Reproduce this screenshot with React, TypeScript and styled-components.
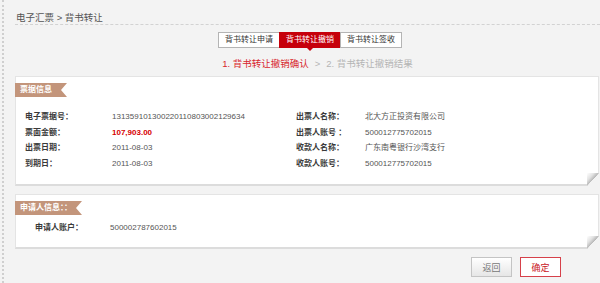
import { Fragment } from "react";
import styled, { createGlobalStyle } from "styled-components";

const FONT = `"Liberation Sans", "Noto Sans CJK SC", sans-serif`;

const GlobalStyle = createGlobalStyle`
  html, body {
    margin: 0;
    padding: 0;
    background-color: #f3f3f3;
    font-family: ${FONT};
  }
`;

const Page = styled.div`
  height: 283px;
  margin-left: 2px;
  border-left: 2px dotted #cfcfcf;
  padding-left: 11px;
  box-sizing: border-box;
  overflow: hidden;
`;

const Breadcrumb = styled.div`
  padding-top: 11px;
  padding-left: 1px;
  line-height: 13px;
  font-size: 9.5px;
  color: #555;
  border-bottom: 1px dashed #d2d2d2;
`;

const TabBar = styled.div`
  display: flex;
  justify-content: center;
  padding-left: 6px;
  margin-top: 7px;
`;

const Tab = styled.div<{ $active?: boolean }>`
  position: relative;
  height: 16px;
  line-height: 14px;
  box-sizing: border-box;
  padding: 0 6px;
  font-size: 8px;
  border: 1px solid ${(p) => (p.$active ? "#c6000b" : "#b4b4b4")};
  background-color: ${(p) => (p.$active ? "#c6000b" : "#fff")};
  color: ${(p) => (p.$active ? "#fff" : "#333")};
  margin-left: -1px;

  ${(p) =>
    p.$active &&
    `
    &::after {
      content: "";
      position: absolute;
      left: 50%;
      bottom: -4px;
      margin-left: -3px;
      border-left: 3px solid transparent;
      border-right: 3px solid transparent;
      border-top: 3px solid #c6000b;
    }
  `}
`;

const Steps = styled.div`
  display: flex;
  justify-content: center;
  padding-left: 20px;
  margin-top: 9px;
  line-height: 14px;
  font-size: 9.5px;
  gap: 6px;
`;

const Step = styled.span<{ $current?: boolean }>`
  color: ${(p) => (p.$current ? "#d8262c" : "#b5b5b5")};
`;

const Card = styled.div`
  position: relative;
  margin-right: 1px;
  background-color: #fff;
  border: 1px solid #e4e4e4;
  border-bottom: 2px solid #dcdcdc;
  padding-top: 6px;

  &::after {
    content: "";
    position: absolute;
    right: -1px;
    bottom: -2px;
    width: 12px;
    height: 13px;
    background: linear-gradient(
      to bottom right,
      #ffffff 0%,
      #e2e2e2 30%,
      #b9b9b9 49%,
      #f3f3f3 51%
    );
  }
`;

const InfoCard = styled(Card)`
  margin-top: 5px;
  height: 110px;
  box-sizing: border-box;
`;

const ApplicantCard = styled(Card)`
  margin-top: 8px;
  height: 55px;
  box-sizing: border-box;
`;

const Ribbon = styled.div<{ $width: number }>`
  width: ${(p) => p.$width}px;
  height: 14px;
  margin-left: -1px;
  box-sizing: border-box;
  padding-left: 5px;
  line-height: 14px;
  font-size: 8px;
  font-weight: bold;
  color: #fff;
  background-color: #c3957b;
  clip-path: polygon(0 0, 100% 0, calc(100% - 6px) 50%, 100% 100%, 0 100%);
`;

const InfoGrid = styled.div`
  display: grid;
  grid-template-columns: 87px 184px 69px 1fr;
  padding: 12px 0 0 9px;
`;

const Label = styled.span`
  line-height: 15.6px;
  font-size: 8px;
  font-weight: bold;
  color: #3a3a3a;
  white-space: nowrap;
`;

const Value = styled.span<{ $money?: boolean }>`
  line-height: 15.6px;
  font-size: 8px;
  color: ${(p) => (p.$money ? "#d60000" : "#555")};
  font-weight: ${(p) => (p.$money ? "bold" : "normal")};
  white-space: nowrap;
`;

const ApplicantRow = styled.div`
  display: grid;
  grid-template-columns: 75px 1fr;
  padding: 5px 0 0 19px;
`;

const Actions = styled.div`
  display: flex;
  justify-content: flex-end;
  gap: 8px;
  margin-top: 8px;
  padding-right: 39px;
`;

const Button = styled.button<{ $primary?: boolean }>`
  width: 41px;
  height: 20px;
  padding: 0;
  box-sizing: border-box;
  font-family: ${FONT};
  font-size: 9px;
  cursor: pointer;
  border: 1px solid ${(p) => (p.$primary ? "#d6414a" : "#c4c4c4")};
  color: ${(p) => (p.$primary ? "#c8161d" : "#777")};
  background: ${(p) =>
    p.$primary ? "#fff" : "linear-gradient(#ffffff, #e6e6e6)"};
`;

const billInfo = [
  {
    label: "电子票据号：",
    value: "131359101300220110803002129634",
    rightLabel: "出票人名称：",
    rightValue: "北大方正投资有限公司",
  },
  {
    label: "票面金额：",
    value: "107,903.00",
    money: true,
    rightLabel: "出票人账号 ：",
    rightValue: "500012775702015",
  },
  {
    label: "出票日期：",
    value: "2011-08-03",
    rightLabel: "收款人名称：",
    rightValue: "广东南粤银行沙湾支行",
  },
  {
    label: "到期日：",
    value: "2011-08-03",
    rightLabel: "收款人账号：",
    rightValue: "500012775702015",
  },
];

const tabs = ["背书转让申请", "背书转让撤销", "背书转让签收"];

function App(): JSX.Element {
  return (
    <>
      <GlobalStyle />
      <Page>
        <Breadcrumb>电子汇票 &gt; 背书转让</Breadcrumb>
        <TabBar>
          {tabs.map((tab, i) => (
            <Tab key={tab} $active={i === 1}>
              {tab}
            </Tab>
          ))}
        </TabBar>
        <Steps>
          <Step $current>1. 背书转让撤销确认</Step>
          <Step>&gt;</Step>
          <Step>2. 背书转让撤销结果</Step>
        </Steps>
        <InfoCard>
          <Ribbon $width={52}>票据信息</Ribbon>
          <InfoGrid>
            {billInfo.map((row) => (
              <Fragment key={row.label}>
                <Label>{row.label}</Label>
                <Value $money={row.money}>{row.value}</Value>
                <Label>{row.rightLabel}</Label>
                <Value>{row.rightValue}</Value>
              </Fragment>
            ))}
          </InfoGrid>
        </InfoCard>
        <ApplicantCard>
          <Ribbon $width={67}>申请人信息：：</Ribbon>
          <ApplicantRow>
            <Label>申请人账户：</Label>
            <Value>500002787602015</Value>
          </ApplicantRow>
        </ApplicantCard>
        <Actions>
          <Button>返回</Button>
          <Button $primary>确定</Button>
        </Actions>
      </Page>
    </>
  );
}

export default App;
